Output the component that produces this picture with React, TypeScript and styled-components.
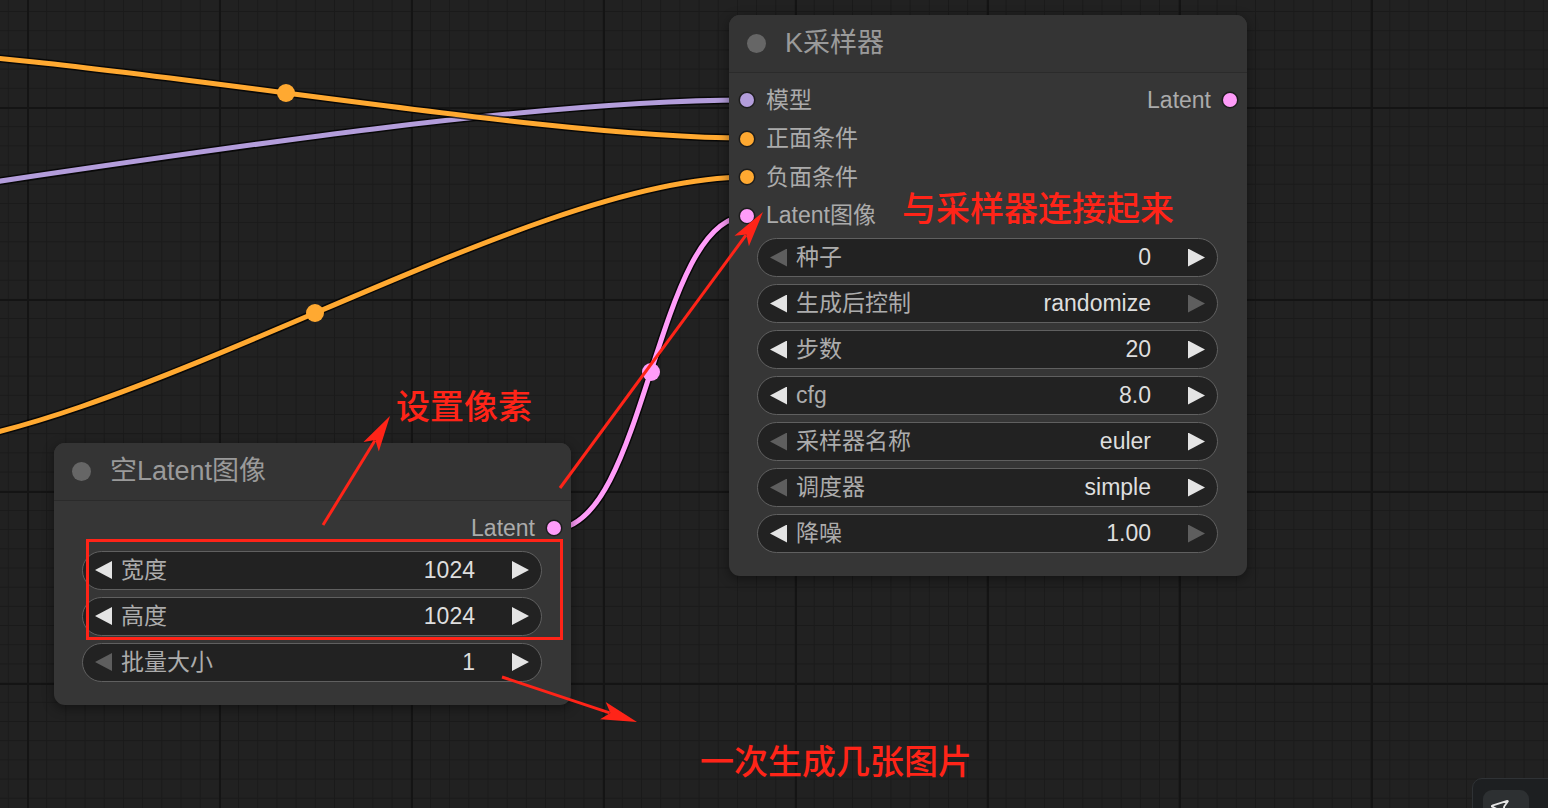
import React from 'react'
import styled, { createGlobalStyle } from 'styled-components'
import { MousePointer2 } from 'lucide-react'

const UI_FONT = `"Liberation Sans", "Noto Sans CJK SC", sans-serif`
const NOTE_FONT = `"Noto Sans CJK SC", "Liberation Sans", sans-serif`

const GlobalStyle = createGlobalStyle`
  html, body {
    margin: 0;
    padding: 0;
    background: #212121;
    overflow: hidden;
  }
  #root {
    width: 1548px;
    height: 808px;
  }
`

const Canvas = styled.div`
  position: relative;
  width: 1548px;
  height: 808px;
  overflow: hidden;
  font-family: ${UI_FONT};
  background-color: #212121;
  background-image:
    linear-gradient(#141414 2px, transparent 2px),
    linear-gradient(90deg, #141414 2px, transparent 2px),
    linear-gradient(#1a1a1a 1px, transparent 1px),
    linear-gradient(90deg, #1a1a1a 1px, transparent 1px);
  background-size: 192px 192px, 192px 192px, 19.2px 19.2px, 19.2px 19.2px;
  background-position: 27px 107px, 27px 107px, 27px 107px, 27px 107px;
`

const Layer = styled.svg<{ $z: number }>`
  position: absolute;
  left: 0;
  top: 0;
  width: 1548px;
  height: 808px;
  z-index: ${p => p.$z};
  pointer-events: none;
`

const Node = styled.div<{ $x: number; $y: number; $w: number }>`
  position: absolute;
  left: ${p => p.$x}px;
  top: ${p => p.$y}px;
  width: ${p => p.$w}px;
  z-index: 1;
  background: #363636;
  border-radius: 11px;
  box-shadow: 0 3px 12px rgba(0, 0, 0, 0.45);
  overflow: hidden;
`

const NodeHeader = styled.div`
  height: 58px;
  display: flex;
  align-items: center;
  gap: 19px;
  padding-left: 18px;
  background: #343434;
  border-bottom: 1px solid #2b2b2b;
  box-sizing: border-box;
`

const TitleDot = styled.span`
  width: 19px;
  height: 19px;
  border-radius: 50%;
  background: #666;
`

const NodeTitle = styled.span`
  font-size: 27px;
  line-height: 1;
  color: #9a9a9a;
`

const NodeBody = styled.div`
  padding: 8px 0 23px;
`

const SlotRow = styled.div<{ $align?: string }>`
  height: 38.5px;
  display: flex;
  align-items: center;
  justify-content: ${p => p.$align || 'space-between'};
`

const Slot = styled.div<{ $out?: boolean }>`
  display: flex;
  align-items: center;
  flex-direction: ${p => (p.$out ? 'row-reverse' : 'row')};
  gap: 12px;
  padding: ${p => (p.$out ? '0 10px 0 0' : '0 0 0 11px')};
`

const SlotDot = styled.span<{ $color: string }>`
  width: 14px;
  height: 14px;
  border-radius: 50%;
  background: ${p => p.$color};
  box-shadow: 0 0 0 1.5px rgba(0, 0, 0, 0.45);
`

const SlotLabel = styled.span`
  font-size: 23px;
  line-height: 1;
  color: #ababab;
`

const WidgetList = styled.div`
  display: flex;
  flex-direction: column;
  gap: 7px;
  margin-top: 3px;
  padding: 0 29px 0 28px;
`

const Widget = styled.div`
  height: 39px;
  box-sizing: border-box;
  display: flex;
  align-items: center;
  padding: 0 12px 0 12px;
  background: #222;
  border: 1.5px solid #606060;
  border-radius: 20px;
`

const Arrow = styled.span<{ $dir: 'left' | 'right'; $on: boolean }>`
  flex: none;
  width: 17px;
  height: 18px;
  margin-left: ${p => (p.$dir === 'right' ? '37px' : '0')};
  background: ${p => (p.$on ? '#e4e4e4' : '#5e5e5e')};
  clip-path: ${p =>
    p.$dir === 'left'
      ? 'polygon(100% 0, 0 50%, 100% 100%)'
      : 'polygon(0 0, 100% 50%, 0 100%)'};
`

const WidgetLabel = styled.span`
  flex: 1;
  margin-left: 9px;
  font-size: 23px;
  line-height: 1;
  color: #acacac;
  white-space: nowrap;
`

const WidgetValue = styled.span`
  font-size: 23px;
  line-height: 1;
  color: #dedede;
`

const Note = styled.div<{ $x: number; $y: number }>`
  position: absolute;
  left: ${p => p.$x}px;
  top: ${p => p.$y}px;
  z-index: 3;
  font-family: ${NOTE_FONT};
  font-size: 34px;
  font-weight: 500;
  line-height: 1;
  color: #ff2418;
  white-space: nowrap;
`

const RedFrame = styled.div`
  position: absolute;
  left: 86px;
  top: 539px;
  width: 477px;
  height: 101px;
  box-sizing: border-box;
  border: 3px solid #ff2418;
  z-index: 3;
`

const Dock = styled.div`
  position: absolute;
  left: 1472px;
  top: 778px;
  width: 110px;
  height: 60px;
  z-index: 3;
  box-sizing: border-box;
  padding: 11px 0 0 10px;
  background: #1d1f21;
  border: 1px solid #2f3235;
  border-radius: 10px;
`

const DockButton = styled.div`
  width: 46px;
  height: 46px;
  border-radius: 9px;
  background: #2d3032;
  display: flex;
  align-items: flex-start;
  justify-content: flex-start;
  padding: 6px 0 0 8px;
  box-sizing: border-box;
  color: #e6e6e6;

  svg {
    transform: rotate(-40deg);
  }
`

type TWidget = { label: string; value: string; left: boolean; right: boolean }

const samplerWidgets: TWidget[] = [
  { label: '种子', value: '0', left: false, right: true },
  { label: '生成后控制', value: 'randomize', left: true, right: false },
  { label: '步数', value: '20', left: true, right: true },
  { label: 'cfg', value: '8.0', left: true, right: true },
  { label: '采样器名称', value: 'euler', left: false, right: true },
  { label: '调度器', value: 'simple', left: false, right: true },
  { label: '降噪', value: '1.00', left: true, right: false },
]

const latentWidgets: TWidget[] = [
  { label: '宽度', value: '1024', left: true, right: true },
  { label: '高度', value: '1024', left: true, right: true },
  { label: '批量大小', value: '1', left: false, right: true },
]

const ORANGE = '#ffa931'
const PURPLE = '#b39ddb'
const PINK = '#ff9cf9'

const wires = [
  { d: 'M -900 285 C -488 285, 335 100, 747 100', color: PURPLE },
  { d: 'M -175 48 C 57 48, 515 138, 747 138', color: ORANGE, mid: [286, 93] },
  { d: 'M -117 449 C 109 449, 521 177, 747 177', color: ORANGE, mid: [315, 313] },
  { d: 'M 554 529 C 646 529, 655 216, 747 216', color: PINK, mid: [651, 372] },
]

const arrows = [
  { from: [323, 525], to: [390, 416] },
  { from: [560, 488], to: [763, 212] },
  { from: [502, 677], to: [637, 722] },
]

const arrowHead = (from: number[], to: number[]) => {
  const dx = to[0] - from[0]
  const dy = to[1] - from[1]
  const len = Math.hypot(dx, dy)
  const ux = dx / len
  const uy = dy / len
  const nx = -uy
  const ny = ux
  const L = 36
  const W = 9
  const bx = to[0] - ux * L
  const by = to[1] - uy * L
  const pts = [
    [to[0], to[1]],
    [bx + nx * W, by + ny * W],
    [to[0] - ux * L * 0.78, to[1] - uy * L * 0.78],
    [bx - nx * W, by - ny * W],
  ]
  return {
    points: pts.map(p => p.join(',')).join(' '),
    neck: [to[0] - ux * L * 0.8, to[1] - uy * L * 0.8],
  }
}

const WidgetRow = ({ w }: { w: TWidget }) => (
  <Widget>
    <Arrow $dir="left" $on={w.left} />
    <WidgetLabel>{w.label}</WidgetLabel>
    <WidgetValue>{w.value}</WidgetValue>
    <Arrow $dir="right" $on={w.right} />
  </Widget>
)

export default function App() {
  return (
    <Canvas>
      <GlobalStyle />

      <Layer $z={0} viewBox="0 0 1548 808">
        {wires.map((w, i) => (
          <g key={i}>
            <path d={w.d} fill="none" stroke="rgba(0,0,0,0.75)" strokeWidth={8} />
            <path d={w.d} fill="none" stroke={w.color} strokeWidth={5} />
            {w.mid && <circle cx={w.mid[0]} cy={w.mid[1]} r={9} fill={w.color} />}
          </g>
        ))}
      </Layer>

      <Node $x={729} $y={15} $w={518}>
        <NodeHeader>
          <TitleDot />
          <NodeTitle>K采样器</NodeTitle>
        </NodeHeader>
        <NodeBody>
          <SlotRow>
            <Slot>
              <SlotDot $color={PURPLE} />
              <SlotLabel>模型</SlotLabel>
            </Slot>
            <Slot $out>
              <SlotDot $color={PINK} />
              <SlotLabel>Latent</SlotLabel>
            </Slot>
          </SlotRow>
          <SlotRow>
            <Slot>
              <SlotDot $color={ORANGE} />
              <SlotLabel>正面条件</SlotLabel>
            </Slot>
          </SlotRow>
          <SlotRow>
            <Slot>
              <SlotDot $color={ORANGE} />
              <SlotLabel>负面条件</SlotLabel>
            </Slot>
          </SlotRow>
          <SlotRow>
            <Slot>
              <SlotDot $color={PINK} />
              <SlotLabel>Latent图像</SlotLabel>
            </Slot>
          </SlotRow>
          <WidgetList>
            {samplerWidgets.map(w => (
              <WidgetRow key={w.label} w={w} />
            ))}
          </WidgetList>
        </NodeBody>
      </Node>

      <Node $x={54} $y={443} $w={517}>
        <NodeHeader>
          <TitleDot />
          <NodeTitle>空Latent图像</NodeTitle>
        </NodeHeader>
        <NodeBody>
          <SlotRow $align="flex-end">
            <Slot $out>
              <SlotDot $color={PINK} />
              <SlotLabel>Latent</SlotLabel>
            </Slot>
          </SlotRow>
          <WidgetList>
            {latentWidgets.map(w => (
              <WidgetRow key={w.label} w={w} />
            ))}
          </WidgetList>
        </NodeBody>
      </Node>

      <RedFrame />

      <Layer $z={3} viewBox="0 0 1548 808">
        {arrows.map((a, i) => {
          const h = arrowHead(a.from, a.to)
          return (
            <g key={i}>
              <line
                x1={a.from[0]}
                y1={a.from[1]}
                x2={h.neck[0]}
                y2={h.neck[1]}
                stroke="#ff2418"
                strokeWidth={3}
              />
              <polygon points={h.points} fill="#ff2418" />
            </g>
          )
        })}
      </Layer>

      <Note $x={902} $y={190}>与采样器连接起来</Note>
      <Note $x={396} $y={388}>设置像素</Note>
      <Note $x={700} $y={743}>一次生成几张图片</Note>

      <Dock>
        <DockButton>
          <MousePointer2 size={22} strokeWidth={2} />
        </DockButton>
      </Dock>
    </Canvas>
  )
}
